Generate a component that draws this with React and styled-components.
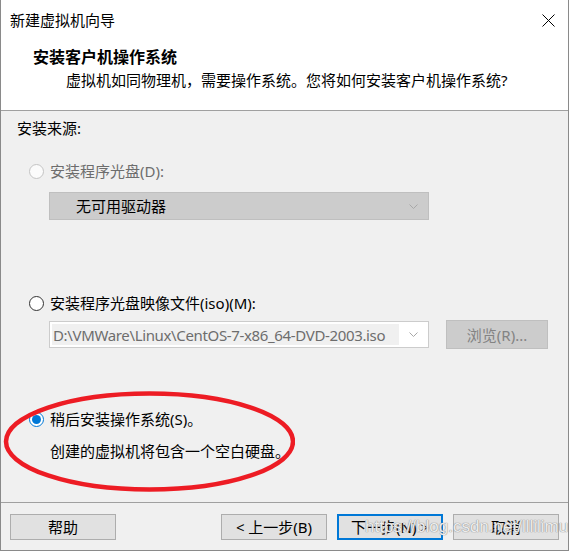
import styled, { createGlobalStyle } from 'styled-components';

const GlobalStyle = createGlobalStyle`
  body {
    margin: 0;
    background: #ffffff;
    font-family: "Noto Sans", "Noto Sans CJK SC", sans-serif;
    font-size: 15px;
    color: #000000;
  }
`;

const Window = styled.div`
  position: relative;
  width: 569px;
  height: 551px;
  box-sizing: border-box;
  border: 1px solid #8a8a8a;
  border-top: none;
  display: flex;
  flex-direction: column;
  background: #ffffff;
  overflow: hidden;
`;

const TitleBar = styled.div`
  height: 40px;
  display: flex;
  align-items: center;
  justify-content: space-between;
  padding: 0 13px 0 9px;
  line-height: 20px;
`;

const Header = styled.div`
  padding: 7px 0 20px 0;
  border-bottom: 1px solid #a0a0a0;
  line-height: 20px;
`;

const HeaderTitle = styled.div`
  padding-left: 32px;
  font-size: 16px;
  font-weight: 700;
`;

const HeaderSub = styled.div`
  margin-top: 3px;
  padding-left: 65px;
`;

const Body = styled.div`
  position: relative;
  flex: 1;
  background: #f0f0f0;
  padding: 7px 0 0 16px;
  line-height: 20px;
`;

const Section = styled.div`
  margin-top: ${(p) => p.$gap || 0}px;
  padding-left: ${(p) => p.$indent || 0}px;
  color: ${(p) => (p.$disabled ? '#6d6d6d' : '#000000')};
`;

const RadioRow = styled.label`
  display: flex;
  align-items: center;
  gap: 6px;
  margin-top: ${(p) => p.$gap}px;
  padding-left: 12px;
  color: ${(p) => (p.$disabled ? '#6d6d6d' : '#000000')};
`;

const Radio = styled.span`
  position: relative;
  width: 15px;
  height: 15px;
  box-sizing: border-box;
  border-radius: 50%;
  background: ${(p) => (p.$state === 'disabled' ? '#fbfbfb' : '#ffffff')};
  border: 1px solid
    ${(p) =>
      p.$state === 'disabled' ? '#c4c4c4' : p.$state === 'on' ? '#0078d7' : '#333333'};

  &::after {
    content: '';
    display: ${(p) => (p.$state === 'on' ? 'block' : 'none')};
    position: absolute;
    left: 2px;
    top: 2px;
    width: 9px;
    height: 9px;
    border-radius: 50%;
    background: #0078d7;
  }
`;

const Combo = styled.div`
  display: flex;
  align-items: center;
  width: 380px;
  height: ${(p) => p.$height}px;
  box-sizing: border-box;
  margin-top: ${(p) => p.$gap || 0}px;
  margin-left: 32px;
  border: 1px solid ${(p) => (p.$filled ? '#bfbfbf' : '#cccccc')};
  background: ${(p) => (p.$filled ? '#cccccc' : '#ffffff')};
`;

const ComboText = styled.div`
  flex: 1;
  align-self: stretch;
  display: flex;
  align-items: center;
  margin: ${(p) => (p.$field ? '2px 0 2px 2px' : '0')};
  padding-left: ${(p) => (p.$field ? 1 : 26)}px;
  background: ${(p) => (p.$field ? '#f0f0f0' : 'transparent')};
  color: ${(p) => (p.$field ? '#6d6d6d' : '#000000')};
  letter-spacing: ${(p) => (p.$field ? '-0.35px' : 'normal')};
  white-space: nowrap;
`;

const Chevron = styled.svg`
  width: 9px;
  height: 5px;
  margin: 0 10px 0 ${(p) => (p.$field ? 10 : 0)}px;
  flex-shrink: 0;
`;

const FileRow = styled.div`
  display: flex;
  align-items: flex-start;
  gap: 17px;
  margin-top: 7px;

  & > ${Combo} {
    margin-top: 1px;
  }
`;

const BrowseButton = styled.button`
  width: 102px;
  height: 29px;
  border: 1px solid #bfbfbf;
  background: #cccccc;
  color: #838383;
  font: inherit;
  padding: 0;
`;

const Annotation = styled.svg`
  position: absolute;
  left: 2px;
  top: 280px;
  width: 292px;
  height: 101px;
  pointer-events: none;
`;

const Footer = styled.div`
  height: 48px;
  box-sizing: border-box;
  border-top: 1px solid #a0a0a0;
  background: #f0f0f0;
  padding: 11px 9px 0 9px;
  display: flex;
  justify-content: space-between;
  align-items: flex-start;
`;

const ButtonGroup = styled.div`
  display: flex;
  gap: 10px;
`;

const Button = styled.button`
  width: 106px;
  height: 26px;
  box-sizing: border-box;
  padding: 0;
  font: inherit;
  line-height: 20px;
  color: #000000;
  background: #e1e1e1;
  border: ${(p) => (p.$primary ? '2px solid #0078d7' : '1px solid #adadad')};
`;

const Watermark = styled.div`
  position: absolute;
  left: 364px;
  top: 517px;
  font-family: "Liberation Sans", sans-serif;
  font-size: 17px;
  line-height: 20px;
  color: rgba(255, 255, 255, 0.85);
  text-shadow: 0 0 1px #8a8a8a, 0 0 1px #8a8a8a;
  pointer-events: none;
  white-space: nowrap;
`;

function ChevronDown({ field }) {
  return (
    <Chevron $field={field} viewBox="0 0 9 5">
      <polyline points="0.5,0.5 4.5,4.5 8.5,0.5" fill="none" stroke="#a8a8a8" strokeWidth="1" />
    </Chevron>
  );
}

export default function App() {
  return (
    <>
      <GlobalStyle />
      <Window>
        <TitleBar>
          <span>新建虚拟机向导</span>
          <svg width="13" height="13" viewBox="0 0 13 13">
            <path d="M0.5 0.5 L12.5 12.5 M12.5 0.5 L0.5 12.5" stroke="#000" strokeWidth="1" />
          </svg>
        </TitleBar>
        <Header>
          <HeaderTitle>安装客户机操作系统</HeaderTitle>
          <HeaderSub>虚拟机如同物理机，需要操作系统。您将如何安装客户机操作系统?</HeaderSub>
        </Header>
        <Body>
          <Section>安装来源:</Section>

          <RadioRow $gap={23} $disabled>
            <Radio $state="disabled" />
            安装程序光盘(D):
          </RadioRow>
          <Combo $filled $gap={11} $height={28}>
            <ComboText>无可用驱动器</ComboText>
            <ChevronDown />
          </Combo>

          <RadioRow $gap={73}>
            <Radio $state="off" />
            安装程序光盘映像文件(iso)(M):
          </RadioRow>
          <FileRow>
            <Combo $height={27}>
              <ComboText $field>D:\VMWare\Linux\CentOS-7-x86_64-DVD-2003.iso</ComboText>
              <ChevronDown field />
            </Combo>
            <BrowseButton disabled>浏览(R)...</BrowseButton>
          </FileRow>

          <RadioRow $gap={60}>
            <Radio $state="on" />
            稍后安装操作系统(S)。
          </RadioRow>
          <Section $gap={12} $indent={33}>
            创建的虚拟机将包含一个空白硬盘。
          </Section>

          <Annotation viewBox="0 0 292 101">
            <ellipse cx="146.5" cy="50.5" rx="143.5" ry="48" fill="none" stroke="#ed1c24" strokeWidth="4.5" />
          </Annotation>
        </Body>
        <Footer>
          <Button>帮助</Button>
          <ButtonGroup>
            <Button>&lt; 上一步(B)</Button>
            <Button $primary>下一步(N) &gt;</Button>
            <Button>取消</Button>
          </ButtonGroup>
        </Footer>
        <Watermark>https://blog.csdn.net/lllilimu</Watermark>
      </Window>
    </>
  );
}
